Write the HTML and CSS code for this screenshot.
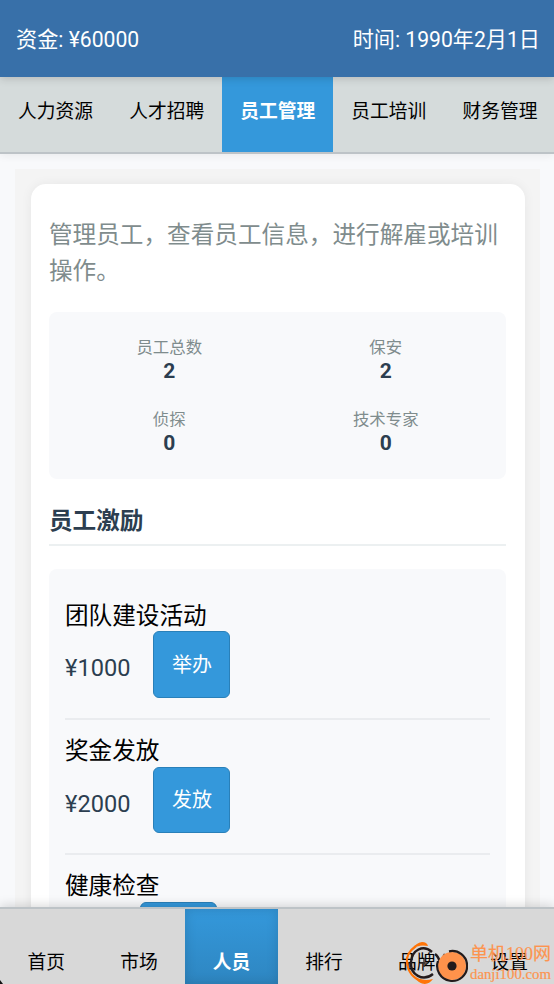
FILE: index.html
```html
<!DOCTYPE html>
<html lang="zh-CN">
<head>
<meta charset="utf-8">
<title>员工管理</title>
<link rel="stylesheet" href="styles.css">
</head>
<body>
<header class="topbar"><span>资金: ¥60000</span><span>时间: 1990年2月1日</span></header>
<nav class="tabs">
  <a class="tab">人力资源</a><a class="tab">人才招聘</a><a class="tab active">员工管理</a><a class="tab">员工培训</a><a class="tab">财务管理</a>
</nav>
<main class="content">
  <div class="container">
    <section class="card">
      <p class="desc">管理员工，查看员工信息，进行解雇或培训操作。</p>
      <div class="stats">
        <div class="stat"><span class="label">员工总数</span><b class="value">2</b></div>
        <div class="stat"><span class="label">保安</span><b class="value">2</b></div>
        <div class="stat"><span class="label">侦探</span><b class="value">0</b></div>
        <div class="stat"><span class="label">技术专家</span><b class="value">0</b></div>
      </div>
      <h2 class="heading">员工激励</h2>
      <div class="options">
        <div class="option">
          <div class="name">团队建设活动</div>
          <div class="action"><span class="price">¥1000</span><button class="btn">举办</button></div>
        </div>
        <div class="option">
          <div class="name">奖金发放</div>
          <div class="action"><span class="price">¥2000</span><button class="btn">发放</button></div>
        </div>
        <div class="option">
          <div class="name">健康检查</div>
          <div class="action"><span class="price">¥500</span><button class="btn">安排</button></div>
        </div>
      </div>
    </section>
  </div>
</main>
<footer class="bottom">
  <a class="item">首页</a><a class="item">市场</a><a class="item active">人员</a><a class="item">排行</a><a class="item">品牌</a><a class="item">设置</a>
</footer>
<div class="watermark">
  <svg class="logo" width="64" height="44" viewBox="0 0 64 44">
    <path d="M12 5C5 10 2 16 3 22C4 31 9 37 18 41" fill="none" stroke="#ff7408" stroke-width="2.2"/>
    <path d="M8 8Q12 2 18 1Q23 1 24 5Q15 3 8 8ZM9 34Q17 41 29 38Q23 46 15 41Z" fill="#ff7408"/>
    <path d="M28 11C19 3 8 9 7 21C6 34 19 41 29 33" fill="none" stroke="#231b1c" stroke-width="2.4"/>
    <path d="M31 13Q35 16 36 22L41 13" fill="none" stroke="#231b1c" stroke-width="2.4"/>
    <path d="M20 18V26M16 22H24" stroke="#39312f" stroke-width="1.5"/>
    <circle cx="48" cy="25" r="14" fill="#ff924b"/>
    <path d="M45 10.300A15 15 0 1 1 34 20" fill="none" stroke="#231b1c" stroke-width="2.2"/>
    <circle cx="48" cy="25" r="4.6" fill="#231b1c"/>
  </svg>
  <div class="mark-text"><span class="mark-name">单机100网</span><span class="mark-url">danji100.com</span></div>
</div>
<svg class="corner" width="3" height="4" viewBox="0 0 3 4"><path d="M0 0L3 4H0Z" fill="#111"/></svg>
</body>
</html>
```
FILE: styles.css
```css
* { box-sizing: border-box; }
body {
  margin: 0;
  height: 984px;
  overflow: hidden;
  position: relative;
  display: flex;
  flex-direction: column;
  background: #f8f9fb;
  color: #000;
  font-family: Roboto, "Noto Sans CJK SC", sans-serif;
}
.topbar {
  flex: none;
  height: 77px;
  padding: 0 14px 3px 16px;
  display: flex;
  align-items: center;
  justify-content: space-between;
  background: #3870a9;
  color: #fff;
  font-size: 21.15px;
  box-shadow: 0 2px 8px rgba(0, 0, 0, .15);
  z-index: 3;
}
.tabs {
  flex: none;
  height: 77px;
  display: flex;
  background: #d5dbdb;
  border-bottom: 2px solid #bdc3c7;
  box-shadow: 0 2px 8px rgba(0, 0, 0, .06);
  z-index: 2;
}
.tab {
  flex: 0 0 111.1px;
  text-align: center;
  font-size: 18.75px;
  line-height: 70px;
  white-space: nowrap;
}
.active { background: #3498db; color: #fff; font-weight: 700; }
.content { flex: 1; min-height: 0; overflow: hidden; padding: 15px 14px 0 15px; }
.container { background: #f4f4f4; padding: 15px 15px 0 16px; }
.card {
  background: #fff;
  border-radius: 15px;
  padding: 34px 19px 20px 18px;
  box-shadow: 0 0 12px rgba(0, 0, 0, .06);
}
.desc { margin: 0 0 23px; color: #7f8c8d; font-size: 23.63px; line-height: 35.5px; }
.stats {
  height: 167px;
  padding: 24px 12px 0;
  display: grid;
  grid-template-columns: 1fr 1fr;
  grid-auto-rows: 72px;
  background: #f8f9fb;
  border-radius: 8px;
}
.stat { display: flex; flex-direction: column; align-items: center; }
.label { color: #7f8c8d; font-size: 16.4px; line-height: 23px; }
.value { color: #2c3e50; font-size: 21px; line-height: 24px; }
.heading {
  margin: 23px 0;
  height: 44px;
  border-bottom: 2px solid #ecf0f1;
  color: #2c3e50;
  font-size: 23.63px;
  line-height: 38px;
}
.options { background: #f8f9fb; border-radius: 8px; padding: 16px; }
.option { height: 135px; padding-top: 14px; border-bottom: 2px solid #eaecef; }
.name { margin-bottom: -3px; font-size: 23.63px; line-height: 35px; }
.option + .option .name { margin-bottom: -2px; }
.option + .option .btn { height: 66px; padding-bottom: 3px; }
.action { display: flex; align-items: center; gap: 23px; }
.price { color: #2c3e50; font-size: 23.6px; padding-top: 7px; }
.btn {
  width: 77px;
  height: 67px;
  padding: 0 0 2px;
  border: 1px solid #2980b9;
  border-radius: 6px;
  background: #3498db;
  color: #fff;
  font: 20px Roboto, "Noto Sans CJK SC", sans-serif;
}
.bottom {
  flex: none;
  height: 77px;
  display: flex;
  background: #d8d8d8;
  border-top: 2px solid #bdc3c7;
  box-shadow: 0 -2px 10px rgba(0, 0, 0, .15);
  z-index: 2;
}
.item { flex: 0 0 92.6px; text-align: center; font-size: 18.75px; line-height: 30px; padding-top: 39px; }
.item.active {
  background: linear-gradient(#3498db, #2e86c1);
  box-shadow: inset 0 0 12px rgba(0, 0, 0, .14);
}
.watermark {
  position: absolute;
  left: 404px;
  top: 941px;
  display: flex;
  gap: 2px;
  z-index: 4;
}
.mark-text { display: flex; flex-direction: column; color: #ff9148; opacity: .95; white-space: nowrap; }
.mark-name { font: 18px/27px "Liberation Serif", "Noto Sans CJK SC", serif; -webkit-text-stroke: .2px #ff9148; }
.mark-url { font: 14.8px/13px "Liberation Serif", serif; -webkit-text-stroke: .2px #ff9148; }
.corner { position: absolute; left: 0; bottom: 0; z-index: 4; }
```
